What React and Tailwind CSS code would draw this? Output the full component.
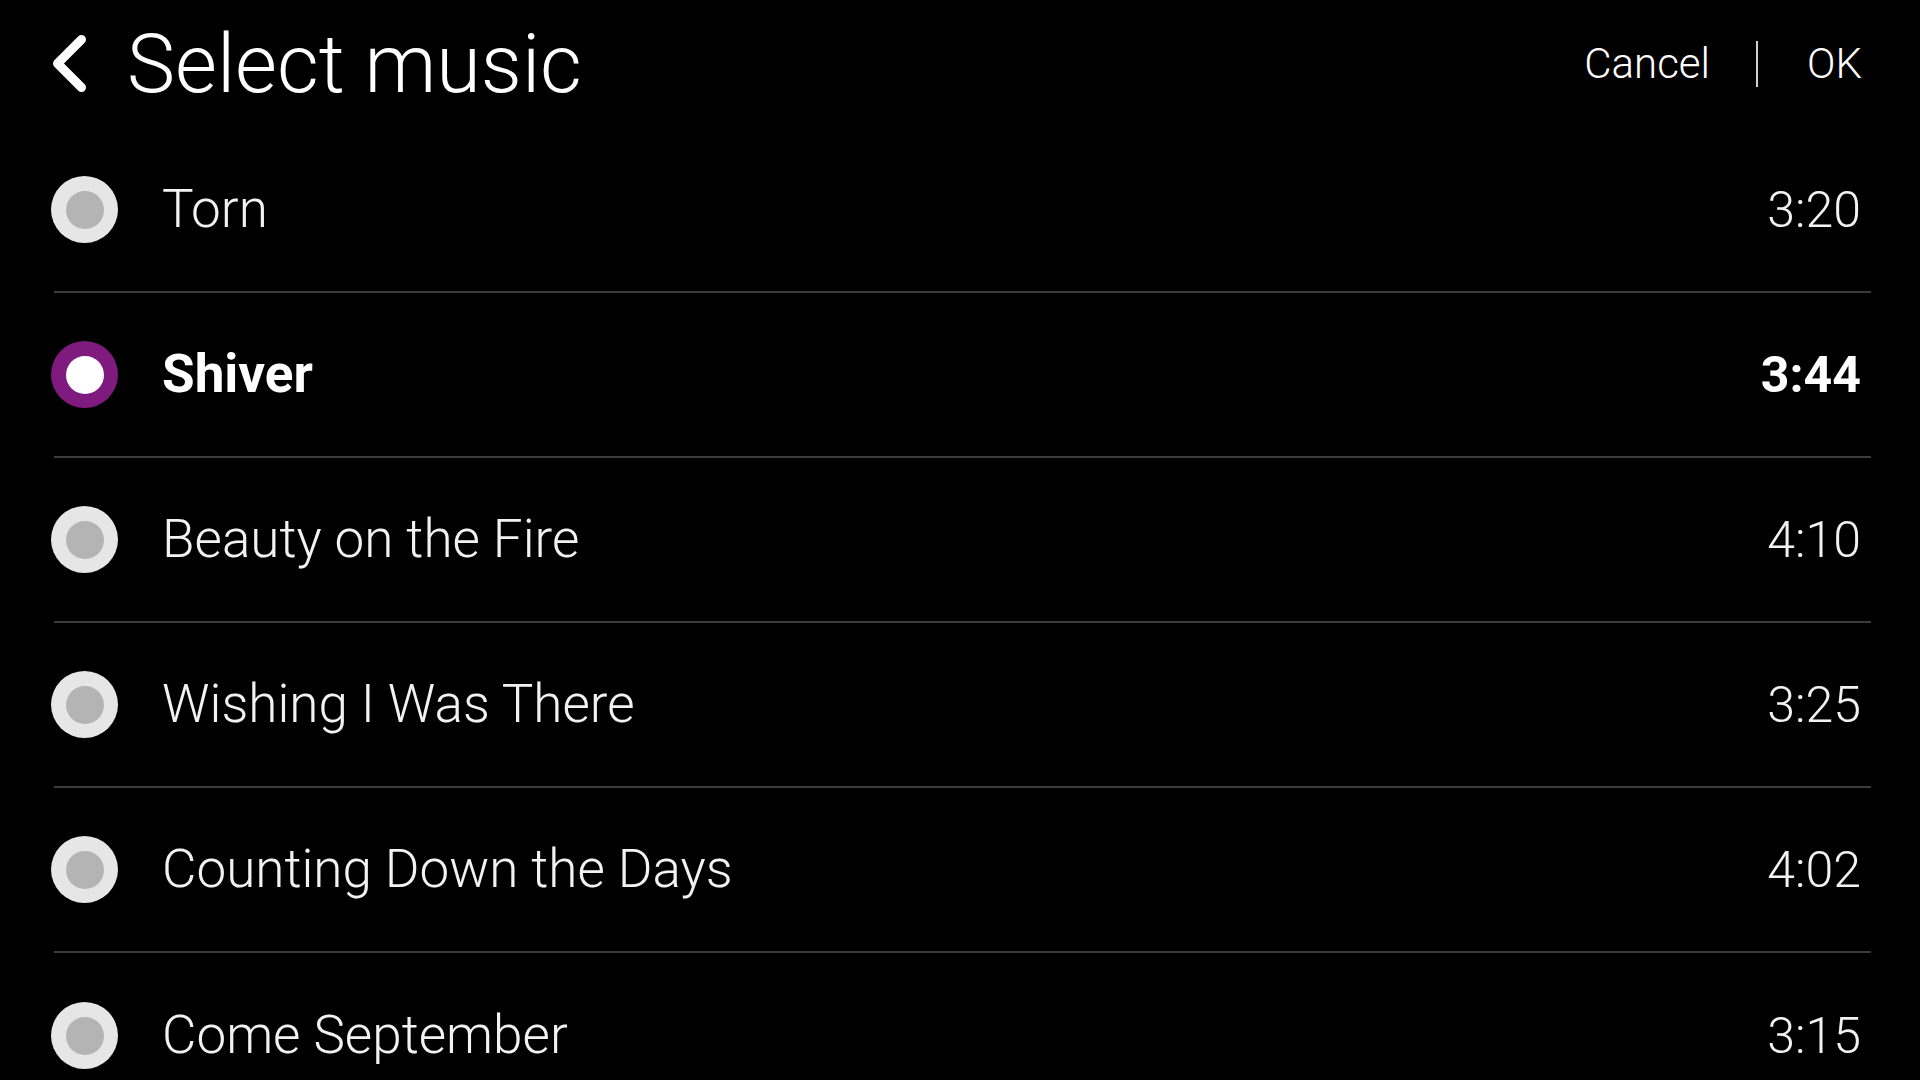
const songs = [
  { title: 'Torn', time: '3:20' },
  { title: 'Shiver', time: '3:44', selected: true },
  { title: 'Beauty on the Fire', time: '4:10' },
  { title: 'Wishing I Was There', time: '3:25' },
  { title: 'Counting Down the Days', time: '4:02' },
  { title: 'Come September', time: '3:15' },
];

const Radio = ({ selected }) => (
  <div
    className={`-ml-[3px] flex h-[67px] w-[67px] shrink-0 items-center justify-center rounded-full ${
      selected ? 'bg-[#7f1a7f]' : 'bg-[#e6e6e6]'
    }`}
  >
    <div
      className={`h-[38px] w-[38px] rounded-full ${selected ? 'bg-white' : 'bg-[#b4b4b4]'}`}
    />
  </div>
);

const SongRow = ({ title, time, selected, last }) => (
  <div
    className={`flex h-[165px] items-center pr-[10px] ${
      last ? '' : 'border-b-2 border-[#3c3c3c]'
    }`}
  >
    <Radio selected={selected} />
    <span
      className={`ml-[44px] flex-1 text-[53px] leading-none ${
        selected ? 'font-bold text-white' : 'font-light text-[#f2f2f2]'
      }`}
    >
      {title}
    </span>
    <span
      className={`text-[50px] leading-none ${
        selected ? 'font-bold text-white' : 'font-light text-[#f2f2f2]'
      }`}
    >
      {time}
    </span>
  </div>
);

export default function App() {
  return (
    <div
      className="h-[1080px] w-[1920px] overflow-hidden bg-black text-white"
      style={{ fontFamily: 'Roboto, "Noto Sans", sans-serif' }}
    >
      {/* header */}
      <div className="flex h-[128px] items-center pl-[50px] pr-[58px]">
        <svg width="40" height="64" viewBox="0 0 40 64" fill="none">
          <path
            d="M31.5 7.5 L7.5 31.5 L31.5 55.5"
            stroke="white"
            strokeWidth="9"
            strokeLinecap="round"
            strokeLinejoin="round"
          />
        </svg>
        <h1 className="ml-[37px] flex-1 text-[81px] font-light leading-none">Select music</h1>
        <div className="flex items-center text-[42px] font-light leading-none">
          <span>Cancel</span>
          <span className="ml-[46px] mr-[49px] h-[46px] w-[2px] bg-[#d0d0d0]" />
          <span>OK</span>
        </div>
      </div>

      {/* list */}
      <div className="pl-[54px] pr-[49px]">
        {songs.map((s, i) => (
          <SongRow key={s.title} {...s} last={i === songs.length - 1} />
        ))}
      </div>
    </div>
  );
}
